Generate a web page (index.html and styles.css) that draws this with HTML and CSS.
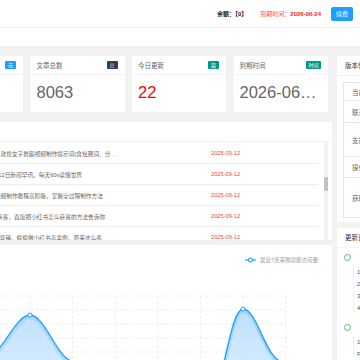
FILE: index.html
```html
<!DOCTYPE html>
<html lang="zh-CN">
<head>
<meta charset="utf-8">
<title>控制台</title>
<link rel="stylesheet" href="styles.css">
</head>
<body>
<header class="topbar">
  <span class="balance">余额：【0】</span>
  <span class="expire">到期时间：<b>2026-06-24</b></span>
  <span class="btn">续费</span>
</header>
<div class="tabs"></div>
<main class="content">
  <div class="layout">
    <div class="main-col">
      <div class="cards">
        <div class="card">
          <div class="card-head"><span>账户余额</span><span class="badge badge-blue">元</span></div>
          <div class="card-body">0.00</div>
        </div>
        <div class="card">
          <div class="card-head"><span>文章总数</span><span class="badge badge-dark">总</span></div>
          <div class="card-body">8063</div>
        </div>
        <div class="card">
          <div class="card-head"><span>今日更新</span><span class="badge badge-green">篇</span></div>
          <div class="card-body red">22</div>
        </div>
        <div class="card">
          <div class="card-head"><span>到期时间</span><span class="badge badge-green">时间</span></div>
          <div class="card-body">2026-06-24</div>
        </div>
      </div>

      <section class="panel list-panel">
        <div class="panel-head">最新文章</div>
        <div class="list-wrap">
          <div class="list">
            <div class="row"><span class="title">2025最新AI短视频教程：敦煌女子舞蹈视频制作提示词(含绘图词、分镜词)</span><span class="date">2025-09-12</span></div>
            <div class="row"><span class="title">【每日早报】2025年9月12日新闻早讯，每天60s读懂世界</span><span class="date">2025-09-12</span></div>
            <div class="row"><span class="title">2025年AI数字人口播短视频制作教程高阶版，掌握全过程制作方法</span><span class="date">2025-09-12</span></div>
            <div class="row"><span class="title">小红书实操：0成本精准获客，直接把小红书怎么获客的方法告诉你</span><span class="date">2025-09-12</span></div>
            <div class="row"><span class="title">实体店老板都在用的商家营销，偷偷做小红书高案例，原来这么香</span><span class="date">2025-09-12</span></div>
          </div>
          <div class="scrollbar"><div class="thumb"></div></div>
        </div>
      </section>

      <section class="panel chart-panel">
        <div class="chart-head">
          <svg class="legend-icon" width="11" height="6" viewBox="0 0 11 6"><line x1="0" y1="3" x2="11" y2="3" stroke="#1e9fff" stroke-width="1.2"/><circle cx="5.5" cy="3" r="2" fill="#fff" stroke="#1e9fff" stroke-width="1.2"/></svg>
          <span class="legend-text">最近7天采购功能访问量</span>
        </div>
        <svg class="chart" width="403" height="120" viewBox="-71 265 403 120">
          <defs>
            <linearGradient id="fill" x1="0" y1="0" x2="0" y2="1">
              <stop offset="0" stop-color="#a9d6ff" stop-opacity="0.75"/>
              <stop offset="1" stop-color="#d9edff" stop-opacity="0.6"/>
            </linearGradient>
          </defs>
          <g stroke="#e8e8e8" stroke-width="0.8" stroke-dasharray="3 2" fill="none">
            <line x1="-55" y1="297" x2="286" y2="297"/>
            <line x1="-55" y1="311" x2="286" y2="311"/>
            <line x1="-55" y1="325" x2="286" y2="325"/>
            <line x1="-55" y1="339" x2="286" y2="339"/>
            <line x1="-55" y1="353" x2="286" y2="353"/>
            <line x1="-55" y1="367" x2="286" y2="367"/>
            <line x1="-12.3" y1="297" x2="-12.3" y2="385"/>
            <line x1="30" y1="297" x2="30" y2="385"/>
            <line x1="72.7" y1="297" x2="72.7" y2="385"/>
            <line x1="115.3" y1="297" x2="115.3" y2="385"/>
            <line x1="158" y1="297" x2="158" y2="385"/>
            <line x1="200.7" y1="297" x2="200.7" y2="385"/>
            <line x1="243.3" y1="297" x2="243.3" y2="385"/>
            <line x1="286" y1="297" x2="286" y2="385"/>
          </g>
          <path fill="url(#fill)" d="M-55,400 C-34,400 -28,357 -13,357 C2,357 15,316 30,316 C45,316 58,362 73,362 C88,362 100,398 115,398 C130,398 143,402 158,402 C172,402 186,420 200,420 C221,420 228,310 243,310 C258,310 265,364 286,364 L286,430 L-55,430 Z"/>
          <path fill="none" stroke="#1e9fff" stroke-opacity="0.18" stroke-width="4" transform="translate(0,2)" d="M-55,400 C-34,400 -28,357 -13,357 C2,357 15,316 30,316 C45,316 58,362 73,362 C88,362 100,398 115,398 C130,398 143,402 158,402 C172,402 186,420 200,420 C221,420 228,310 243,310 C258,310 265,364 286,364"/>
          <path fill="none" stroke="#1e9fff" stroke-width="1.3" d="M-55,400 C-34,400 -28,357 -13,357 C2,357 15,316 30,316 C45,316 58,362 73,362 C88,362 100,398 115,398 C130,398 143,402 158,402 C172,402 186,420 200,420 C221,420 228,310 243,310 C258,310 265,364 286,364"/>
          <circle cx="30" cy="316" r="2" fill="#fff" stroke="#1e9fff" stroke-width="1"/>
          <circle cx="243" cy="310" r="2" fill="#fff" stroke="#1e9fff" stroke-width="1"/>
        </svg>
      </section>
    </div>

    <aside class="side-col">
      <section class="panel version">
        <div class="panel-head">版本信息</div>
        <table class="vtable">
          <tr class="h18"><td class="label">当前版本</td><td>v3.2.0</td></tr>
          <tr class="h22"><td class="label">联系客服</td><td>在线客服</td></tr>
          <tr class="h34"><td class="label">支持平台</td><td>PC / 手机</td></tr>
          <tr class="h21"><td class="label">操作说明</td><td>查看文档</td></tr>
          <tr class="h40"><td class="label">获取更新</td><td>自动更新</td></tr>
        </table>
      </section>
      <section class="panel log">
        <div class="panel-head">更新日志</div>
        <div class="log-list">
          <div class="log-item">
            <div class="log-title"><span class="dot"></span><span class="ver">v3.2.0</span></div>
            <div class="log-body">
              <p>1. 优化文章列表加载速度</p>
              <p>2. 新增采购功能访问统计</p>
              <p>3. 修复部分已知问题</p>
              <p>4. 调整首页布局</p>
            </div>
          </div>
          <div class="log-item">
            <div class="log-title"><span class="dot"></span><span class="ver">v3.1.0</span></div>
            <div class="log-body">
              <p>1. 新增续费功能</p>
              <p>P. 其他优化</p>
            </div>
          </div>
        </div>
      </section>
    </aside>
  </div>
</main>
</body>
</html>
```
FILE: styles.css
```css
* { box-sizing: border-box; margin: 0; padding: 0; }
html, body { width: 360px; height: 360px; overflow: hidden; }
body {
  font-family: "Liberation Sans", "Noto Sans CJK SC", sans-serif;
  background: #f2f2f2;
  color: #666;
}

.topbar {
  height: 28px;
  background: #fff;
  border-bottom: 1px solid #f0f0f0;
  display: flex;
  align-items: center;
  justify-content: flex-end;
  padding-right: 7px;
  font-size: 6px;
}
.balance { font-weight: 700; color: #222; margin-right: 13px; }
.expire { color: #ff4d4d; margin-right: 10px; }
.expire b { color: #f22; }
.btn {
  width: 22px;
  height: 14px;
  background: #1e9fff;
  color: #fff;
  border-radius: 2px;
  display: flex;
  align-items: center;
  justify-content: center;
  font-size: 6px;
}
.tabs { height: 18px; background: #fff; box-shadow: 0 1px 2px rgba(0,0,0,0.03); }

.content { padding-top: 10px; overflow: hidden; }
.layout {
  display: flex;
  align-items: flex-start;
  gap: 5px;
  margin-left: -71px;
  width: 560px;
}
.main-col { width: 403px; display: flex; flex-direction: column; }
.side-col { width: 150px; display: flex; flex-direction: column; gap: 6px; }

.cards { display: grid; grid-template-columns: repeat(4, 94px); column-gap: 7.5px; }
.card { background: #fff; height: 56px; }
.card-head {
  height: 19px;
  border-bottom: 1px solid #f3f3f3;
  display: flex;
  align-items: center;
  justify-content: space-between;
  padding: 0 7px 0 6px;
  font-size: 6.5px;
  color: #666;
}
.badge {
  font-size: 5px;
  color: #fff;
  height: 8px;
  line-height: 8px;
  padding: 0 2px;
  min-width: 11px;
  text-align: center;
  border-radius: 1px;
}
.badge-blue { background: #1e9fff; }
.badge-dark { background: #2f4056; color: #c8ccd2; }
.badge-green { background: #009688; }
.card-body {
  padding: 7px 6px 0;
  font-size: 16.5px;
  line-height: 20px;
  color: #666;
  white-space: nowrap;
  overflow: hidden;
  text-overflow: ellipsis;
}
.card-body.red { color: #f00; }

.panel { background: #fff; }
.panel-head {
  height: 20px;
  line-height: 19px;
  border-bottom: 1px solid #f3f3f3;
  padding-left: 8px;
  font-size: 6.5px;
  color: #333;
}

.list-panel { margin-top: 10px; }
.list-wrap { display: flex; height: 98px; padding-right: 4px; overflow: hidden; }
.list { flex: 1; margin-right: 6px; padding-top: 1px; }
.row {
  height: 21px;
  border-bottom: 1px solid #eee;
  display: flex;
  align-items: center;
  padding-left: 8px;
  font-size: 5.7px;
  color: #666;
}
.title { width: 184px; white-space: nowrap; overflow: hidden; text-overflow: ellipsis; }
.date { margin-left: 90px; color: #ff4040; }
.scrollbar { width: 4px; background: #f1f1f1; }
.thumb { height: 14px; margin-top: 35px; background: #c1c1c1; border-radius: 1px; }

.chart-panel { margin-top: 5px; height: 200px; }
.chart-head {
  height: 19px;
  padding: 11px 14px 0 0;
  display: flex;
  justify-content: flex-end;
  align-items: center;
  gap: 4px;
}
.legend-text { font-size: 5.5px; color: #999; line-height: 8px; }
.chart { display: block; }

.version { height: 166px; }
.vtable {
  margin: 6px 0 0 6px;
  border-collapse: collapse;
  width: 140px;
  font-size: 6.5px;
  color: #666;
}
.vtable td { border: 1px solid #e6e6e6; padding: 0 0 0 8px; vertical-align: middle; }
.vtable .label { width: 30px; white-space: nowrap; }
.h18 { height: 18px; }
.h22 { height: 22px; }
.h34 { height: 34px; }
.h21 { height: 21px; }
.h40 { height: 40px; }

.log { height: 200px; }
.log-list { padding: 2px 0 0 7px; }
.log-title { height: 14px; display: flex; align-items: center; gap: 12px; font-size: 6.5px; color: #333; }
.dot { width: 7px; height: 7px; border: 1px solid #5fb878; border-radius: 50%; background: #fff; flex: none; }
.log-body {
  margin-left: 9px;
  margin-bottom: 6px;
  border-left: 1px solid #eee;
  padding: 2px 0 0 3px;
  font-size: 6px;
  line-height: 12px;
  color: #555;
  white-space: nowrap;
}
```
